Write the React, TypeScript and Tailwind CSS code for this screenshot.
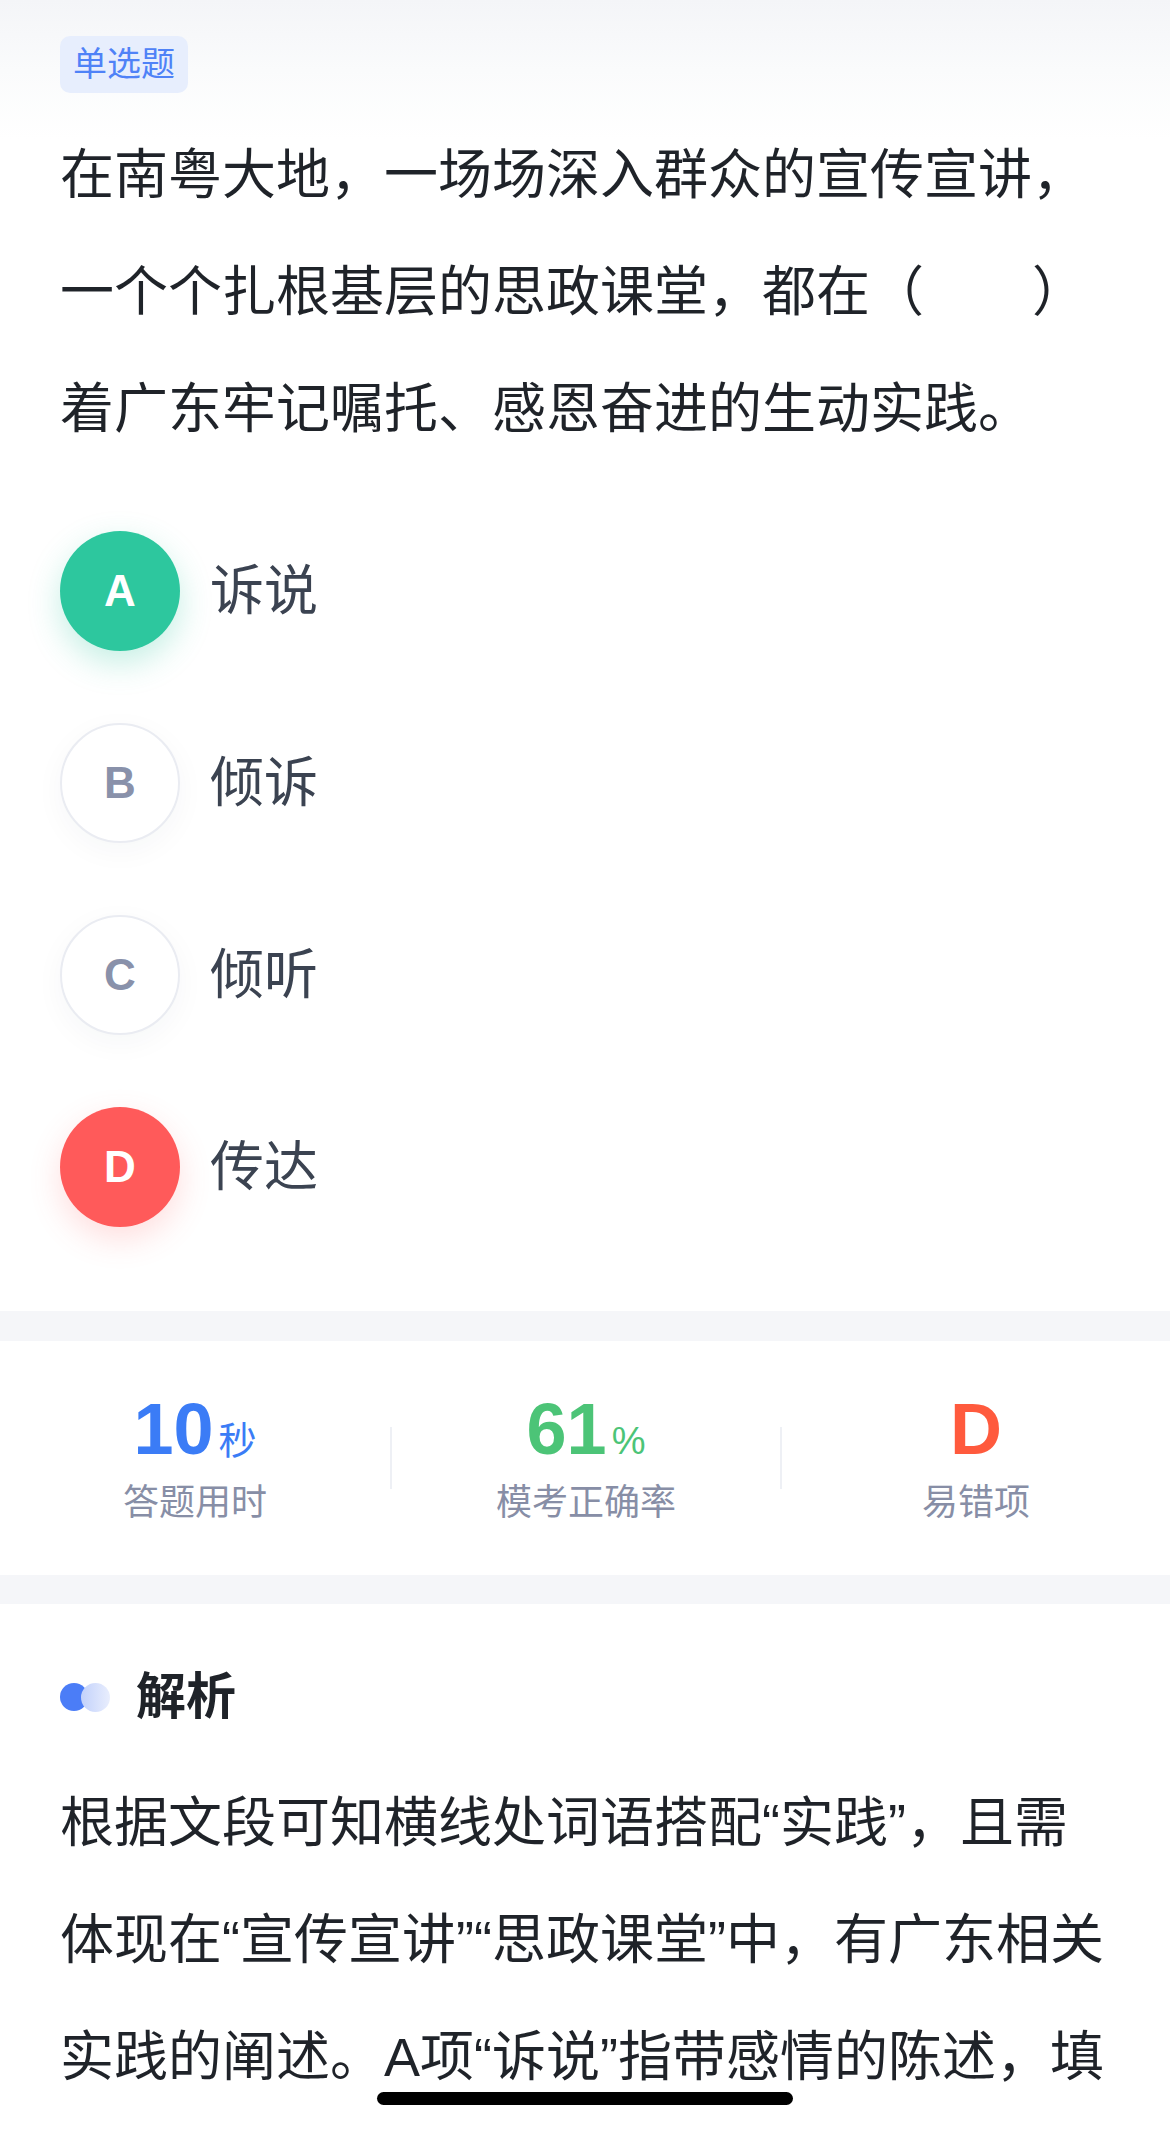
const OPTIONS = [
  { key: "A", text: "诉说", state: "right" },
  { key: "B", text: "倾诉", state: "idle" },
  { key: "C", text: "倾听", state: "idle" },
  { key: "D", text: "传达", state: "wrong" },
];

const STATS = [
  { value: "10", unit: "秒", label: "答题用时", color: "text-[#3b7cf6]" },
  { value: "61", unit: "%", label: "模考正确率", color: "text-[#4cc477]" },
  { value: "D", unit: "", label: "易错项", color: "text-[#ff5a3d]" },
];

const circleStyles: Record<string, string> = {
  right: "bg-[#2dc79e] text-white shadow-[0_12px_32px_rgba(45,199,158,0.28)]",
  wrong: "bg-[#ff5a5a] text-white shadow-[0_12px_32px_rgba(255,90,90,0.2)]",
  idle: "bg-white text-[#8991aa] border-2 border-[#eaecf2] shadow-[0_8px_30px_rgba(30,40,80,0.04)]",
};

const App = () => {
  return (
    <div className="relative w-full h-[2130px] overflow-hidden bg-white font-[Liberation_Sans,Noto_Sans_CJK_SC,sans-serif]">
      {/* question */}
      <section className="bg-[linear-gradient(to_bottom,#f4f5f8_0px,#fafbfc_70px,#ffffff_140px)] px-[60px] pt-[36px] pb-[84px]">
        <div className="flex">
          <span className="h-[57px] px-[13px] flex items-center rounded-[10px] bg-[#e7eefd] text-[#4f82f7] text-[34px]">
            单选题
          </span>
        </div>
        <p className="mt-[24px] text-[54px] leading-[117px] text-[#1f2329]">
          在南粤大地，一场场深入群众的宣传宣讲，一个个扎根基层的思政课堂，都在（　　）着广东牢记嘱托、感恩奋进的生动实践。
        </p>

        <div className="mt-[63px] flex flex-col gap-[72px]">
          {OPTIONS.map((opt) => (
            <div key={opt.key} className="flex items-center">
              <div
                className={`w-[120px] h-[120px] rounded-full flex items-center justify-center text-[44px] font-bold ${circleStyles[opt.state]}`}
              >
                {opt.key}
              </div>
              <span className="ml-[30px] text-[54px] leading-[1.2] text-[#3b4351]">{opt.text}</span>
            </div>
          ))}
        </div>
      </section>

      <div className="h-[30px] bg-[#f5f6f9]"></div>

      {/* stats */}
      <section className="h-[234px] flex items-center">
        {STATS.map((s, i) => (
          <div key={s.label} className="flex-1 flex items-center">
            {i > 0 && <div className="w-[2px] h-[62px] bg-[#eef0f5]"></div>}
            <div className="flex-1 flex flex-col items-center -mt-[3px]">
              <div className={`flex items-baseline h-[72px] ${s.color}`}>
                <span className="text-[72px] leading-none font-bold">{s.value}</span>
                {s.unit && <span className="ml-[5px] text-[38px] leading-none">{s.unit}</span>}
              </div>
              <span className="mt-[20px] text-[36px] leading-[36px] text-[#878ea6]">{s.label}</span>
            </div>
          </div>
        ))}
      </section>

      <div className="h-[29px] bg-[#f5f6f9]"></div>

      {/* analysis */}
      <section className="px-[60px] pt-[58px]">
        <div className="flex items-center h-[70px]">
          <div className="flex items-center">
            <span className="w-[28px] h-[28px] rounded-full bg-[#4b7df7]"></span>
            <span className="-ml-[7px] w-[29px] h-[29px] rounded-full bg-gradient-to-r from-[#c2d1fb] to-[#e9eefd]"></span>
          </div>
          <h3 className="ml-[26px] text-[50px] font-bold text-[#1f2329]">解析</h3>
        </div>
        <p className="mt-[33px] text-[54px] leading-[117px] text-[#1f2329]">
          根据文段可知横线处词语搭配“实践”，且需体现在“宣传宣讲”“思政课堂”中，有广东相关实践的阐述。A项“诉说”指带感情的陈述，填
        </p>
      </section>

      <div className="absolute bottom-[25px] left-1/2 -translate-x-1/2 w-[416px] h-[13px] rounded-full bg-black"></div>
    </div>
  );
};

export default App;
